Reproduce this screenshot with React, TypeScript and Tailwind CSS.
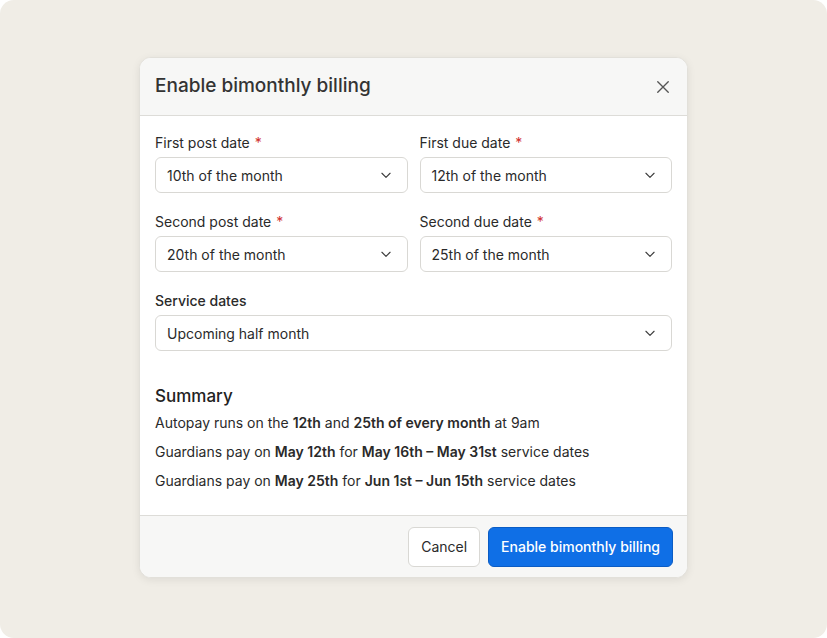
import React from "react";

const Chevron = () => (
  <svg width="14" height="14" viewBox="0 0 24 24" fill="none" stroke="#3f3f3f" strokeWidth="2" strokeLinecap="round" strokeLinejoin="round"><path d="M5 9l7 7 7-7" /></svg>
);

const Select = ({ value }: { value: string }) => (
  <div className="h-[36px] bg-white border border-[#d9d8d4] rounded-[6px] flex items-center justify-between pl-[11px] pr-[14px] text-[14px] text-[#2a2a2a]">
    <span>{value}</span>
    <Chevron />
  </div>
);

const Field = ({ label, value, req = true }: { label: string; value: string; req?: boolean }) => (
  <div className="flex flex-col">
    <div className={`text-[14px] text-[#2a2a2a] mb-[5px] leading-[18px] ${req ? "" : "font-medium"}`}>
      {label}
      {req && <span className="text-[#d0312d] ml-[5px]">*</span>}
    </div>
    <Select value={value} />
  </div>
);

export default function App() {
  return (
    <div className="w-[827px] h-[638px] bg-white" style={{ fontFamily: "Inter, 'Noto Sans', sans-serif" }}>
      <div className="w-full h-full bg-[#f0ede6] rounded-[14px] flex items-start justify-center pt-[57px]">
        <div className="w-[549px] bg-white rounded-[12px] border border-[#e2e0da] shadow-[0_2px_8px_rgba(0,0,0,0.08)] overflow-hidden">
          <div className="h-[58px] bg-[#f7f7f6] border-b border-[#dddcd8] flex items-center justify-between px-[15px]">
            <div className="text-[19px] font-medium text-[#333]">Enable bimonthly billing</div>
            <svg width="18" height="18" viewBox="0 0 24 24" fill="none" stroke="#555" strokeWidth="1.8" strokeLinecap="round"><path d="M5 5l14 14M19 5L5 19" /></svg>
          </div>
          <div className="px-[15px] pt-[18px] pb-[20px]">
            <div className="grid grid-cols-2 gap-x-[12px] gap-y-[20px]">
              <Field label="First post date" value="10th of the month" />
              <Field label="First due date" value="12th of the month" />
              <Field label="Second post date" value="20th of the month" />
              <Field label="Second due date" value="25th of the month" />
              <div className="col-span-2"><Field label="Service dates" value="Upcoming half month" req={false} /></div>
            </div>
            <div className="mt-[34px] text-[17px] font-medium text-[#222] leading-[22px]">Summary</div>
            <div className="text-[14px] text-[#2a2a2a] leading-[29px] mt-[1px]">
              <div>Autopay runs on the <b className="font-semibold">12th</b> and <b className="font-semibold">25th of every month</b> at 9am</div>
              <div>Guardians pay on <b className="font-semibold">May 12th</b> for <b className="font-semibold">May 16th – May 31st</b> service dates</div>
              <div>Guardians pay on <b className="font-semibold">May 25th</b> for <b className="font-semibold">Jun 1st – Jun 15th</b> service dates</div>
            </div>
          </div>
          <div className="bg-[#f7f7f6] border-t border-[#dddcd8] h-[62px] flex items-center justify-end gap-[8px] px-[14px]">
            <button className="h-[40px] px-[12px] bg-white border border-[#d9d8d4] rounded-[6px] text-[14px] text-[#2a2a2a]">Cancel</button>
            <button className="h-[40px] px-[12px] bg-[#0f6fe6] border border-[#0b5cc4] rounded-[6px] text-[14px] text-white font-medium">Enable bimonthly billing</button>
          </div>
        </div>
      </div>
    </div>
  );
}
